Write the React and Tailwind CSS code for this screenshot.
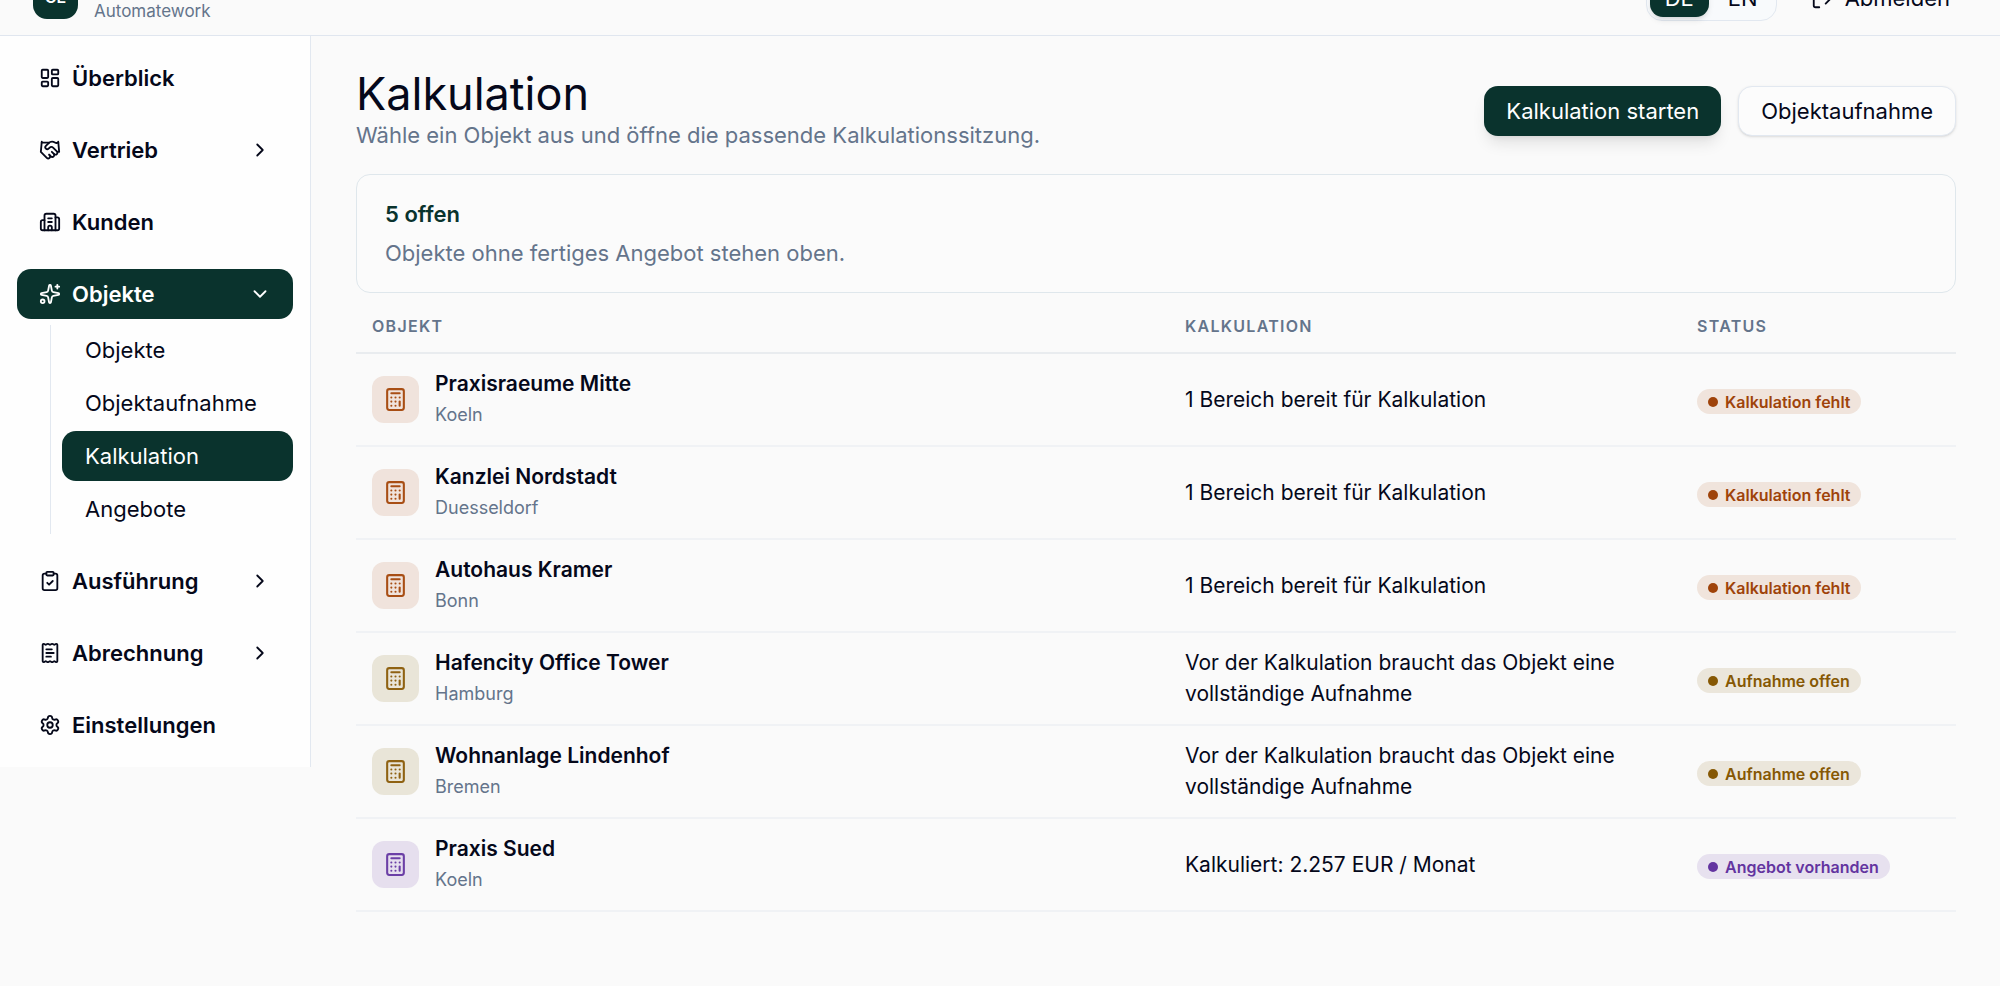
import React, { useState } from 'react'
import {
  Calculator,
  ChevronDown,
  ChevronRight,
  ClipboardCheck,
  Handshake,
  Building2,
  LayoutDashboard,
  LogOut,
  ReceiptText,
  Settings,
  Sparkles
} from 'lucide-react'

const navItems = [
  { id: 'overview', label: 'Überblick', icon: LayoutDashboard },
  { id: 'sales', label: 'Vertrieb', icon: Handshake, expandable: true },
  { id: 'customers', label: 'Kunden', icon: Building2 },
  {
    id: 'objects',
    label: 'Objekte',
    icon: Sparkles,
    expandable: true,
    children: ['Objekte', 'Objektaufnahme', 'Kalkulation', 'Angebote']
  },
  { id: 'execution', label: 'Ausführung', icon: ClipboardCheck, expandable: true },
  { id: 'billing', label: 'Abrechnung', icon: ReceiptText, expandable: true },
  { id: 'settings', label: 'Einstellungen', icon: Settings }
]

const tones = {
  missing: { box: 'bg-[#f0e3dc] text-[#a84e14]', badge: 'bg-[#f0e4dc] text-[#9f430a]', label: 'Kalkulation fehlt' },
  open: { box: 'bg-[#e9e5d8] text-[#8f6212]', badge: 'bg-[#ebe6db] text-[#865804]', label: 'Aufnahme offen' },
  offer: { box: 'bg-[#e6dfee] text-[#6b3fa6]', badge: 'bg-[#e7e1ef] text-[#6334a0]', label: 'Angebot vorhanden' }
}

const rows = [
  { name: 'Praxisraeume Mitte', city: 'Koeln', info: '1 Bereich bereit für Kalkulation', tone: 'missing' },
  { name: 'Kanzlei Nordstadt', city: 'Duesseldorf', info: '1 Bereich bereit für Kalkulation', tone: 'missing' },
  { name: 'Autohaus Kramer', city: 'Bonn', info: '1 Bereich bereit für Kalkulation', tone: 'missing' },
  { name: 'Hafencity Office Tower', city: 'Hamburg', info: 'Vor der Kalkulation braucht das Objekt eine vollständige Aufnahme', tone: 'open' },
  { name: 'Wohnanlage Lindenhof', city: 'Bremen', info: 'Vor der Kalkulation braucht das Objekt eine vollständige Aufnahme', tone: 'open' },
  { name: 'Praxis Sued', city: 'Koeln', info: 'Kalkuliert: 2.257 EUR / Monat', tone: 'offer' }
]

const Header = () => {
  const [lang, setLang] = useState('DE')

  return (
    <header className="flex h-9 items-end justify-between overflow-hidden border-b border-[#e0e6ef] pl-[33px] pr-[45px]">
      <div className="flex shrink-0 items-end gap-4 pb-3">
        <div className="mb-1 flex size-[45px] items-center justify-center rounded-[14px] bg-[#0a332d] text-base font-semibold text-white">
          CE
        </div>
        <span className="text-[17px] leading-6 text-[#64748b]">Automatework</span>
      </div>
      <div className="flex shrink-0 items-end gap-[29px] pb-[14px]">
        <div className="flex gap-1 rounded-[16px] border border-[#e2e8f0] bg-[#f8fafc] p-[3px]">
          {['DE', 'EN'].map((code) => (
            <button
              key={code}
              onClick={() => setLang(code)}
              className={`h-[38px] rounded-[13px] px-[15px] text-[22px] ${lang === code ? 'bg-[#0a332d] text-white shadow-md' : ''}`}
            >
              {code}
            </button>
          ))}
        </div>
        <button className="flex h-[45px] items-center gap-3 px-[5px] text-[22px]">
          <LogOut className="size-[22px]" />
          Abmelden
        </button>
      </div>
    </header>
  )
}

const Sidebar = () => {
  const [openId, setOpenId] = useState('objects')

  return (
    <aside className="w-[311px] shrink-0 self-start border-r border-[#e2e8f0] bg-[#fefefe] p-[17px]">
      <nav className="flex flex-col gap-[22px]">
        {navItems.map((item) => {
          const Icon = item.icon
          const open = openId === item.id && item.expandable
          const Chevron = open ? ChevronDown : ChevronRight
          return (
            <div key={item.id}>
              <button
                onClick={() => setOpenId(item.id)}
                className={`flex h-[50px] w-full items-center rounded-[14px] px-[22px] text-[22px] font-semibold ${open ? 'bg-[#0a332d] text-white' : ''}`}
              >
                <Icon className="mr-[11px] size-[22px]" />
                {item.label}
                {item.expandable && <Chevron className="ml-auto size-[22px]" />}
              </button>
              {open && item.children && (
                <div className="ml-[33px] mt-[6px] flex flex-col gap-[3px] border-l border-[#e2e8f0] pl-[11px]">
                  {item.children.map((child) => (
                    <a
                      key={child}
                      href="#"
                      className={`flex h-[50px] items-center rounded-[14px] px-[23px] text-[22px] ${child === 'Kalkulation' ? 'bg-[#0a332d] text-white' : ''}`}
                    >
                      {child}
                    </a>
                  ))}
                </div>
              )}
            </div>
          )
        })}
      </nav>
    </aside>
  )
}

const StatusBadge = ({ tone }) => (
  <span className={`inline-flex h-[25px] items-center gap-[7px] whitespace-nowrap rounded-full px-[11px] text-base font-semibold ${tones[tone].badge}`}>
    <span className="size-[10px] rounded-full bg-current" />
    {tones[tone].label}
  </span>
)

const ObjectTable = () => (
  <table className="w-full table-fixed border-collapse text-left">
    <thead>
      <tr className="h-[60px] border-b-2 border-[#e9ecef] text-base uppercase tracking-[0.08em] text-[#64748b]">
        <th className="px-4 pt-[6px] font-semibold">Objekt</th>
        <th className="w-[32%] px-4 pt-[6px] font-semibold">Kalkulation</th>
        <th className="w-[275px] px-4 pt-[6px] font-semibold">Status</th>
      </tr>
    </thead>
    <tbody>
      {rows.map((row) => (
        <tr key={row.name} className="border-b-2 border-[#f0f2f5]">
          <td className="px-4 pb-[15px] pt-[14px]">
            <div className="flex items-center gap-4">
              <div className={`flex size-[47px] shrink-0 items-center justify-center rounded-[12px] ${tones[row.tone].box}`}>
                <Calculator className="size-[25px]" />
              </div>
              <div>
                <div className="text-[21px] font-semibold leading-[31px]">{row.name}</div>
                <div className="text-lg leading-[31px] text-[#64748b]">{row.city}</div>
              </div>
            </div>
          </td>
          <td className="px-4 pb-[15px] pt-[14px] text-[21px] leading-[31px]">{row.info}</td>
          <td className="px-4 pt-1 align-middle">
            <StatusBadge tone={row.tone} />
          </td>
        </tr>
      ))}
    </tbody>
  </table>
)

const App = () => {
  return (
    <div className="min-h-screen bg-[#fafafa] font-['Inter',sans-serif] text-[#05081a]">
      <Header />
      <div className="flex">
        <Sidebar />
        <main className="min-w-0 flex-1 pb-16 pl-[45px] pr-11 pt-[35px]">
          <div className="flex items-center justify-between">
            <div>
              <h1 className="mb-[2px] text-[45px] leading-[46px]">Kalkulation</h1>
              <p className="text-[22px] leading-8 text-[#64748b]">Wähle ein Objekt aus und öffne die passende Kalkulationssitzung.</p>
            </div>
            <div className="flex gap-[17px]">
              <button className="h-[50px] rounded-[14px] bg-[#0a332d] px-[22px] text-[22px] text-white shadow-lg">
                Kalkulation starten
              </button>
              <button className="h-[50px] rounded-[14px] border border-[#e2e8f0] bg-[#fcfcfc] px-[22px] text-[22px] shadow-sm">
                Objektaufnahme
              </button>
            </div>
          </div>

          <section className="mt-[23px] rounded-[14px] border border-[#dfe7ec] bg-[#fbfbfb] px-7 pb-[19px] pt-5">
            <p className="text-[22px] font-semibold leading-[39px] text-[#0a332d]">5 offen</p>
            <p className="text-[22px] leading-[39px] text-[#64748b]">Objekte ohne fertiges Angebot stehen oben.</p>
          </section>

          <ObjectTable />
        </main>
      </div>
    </div>
  )
}

export default App
